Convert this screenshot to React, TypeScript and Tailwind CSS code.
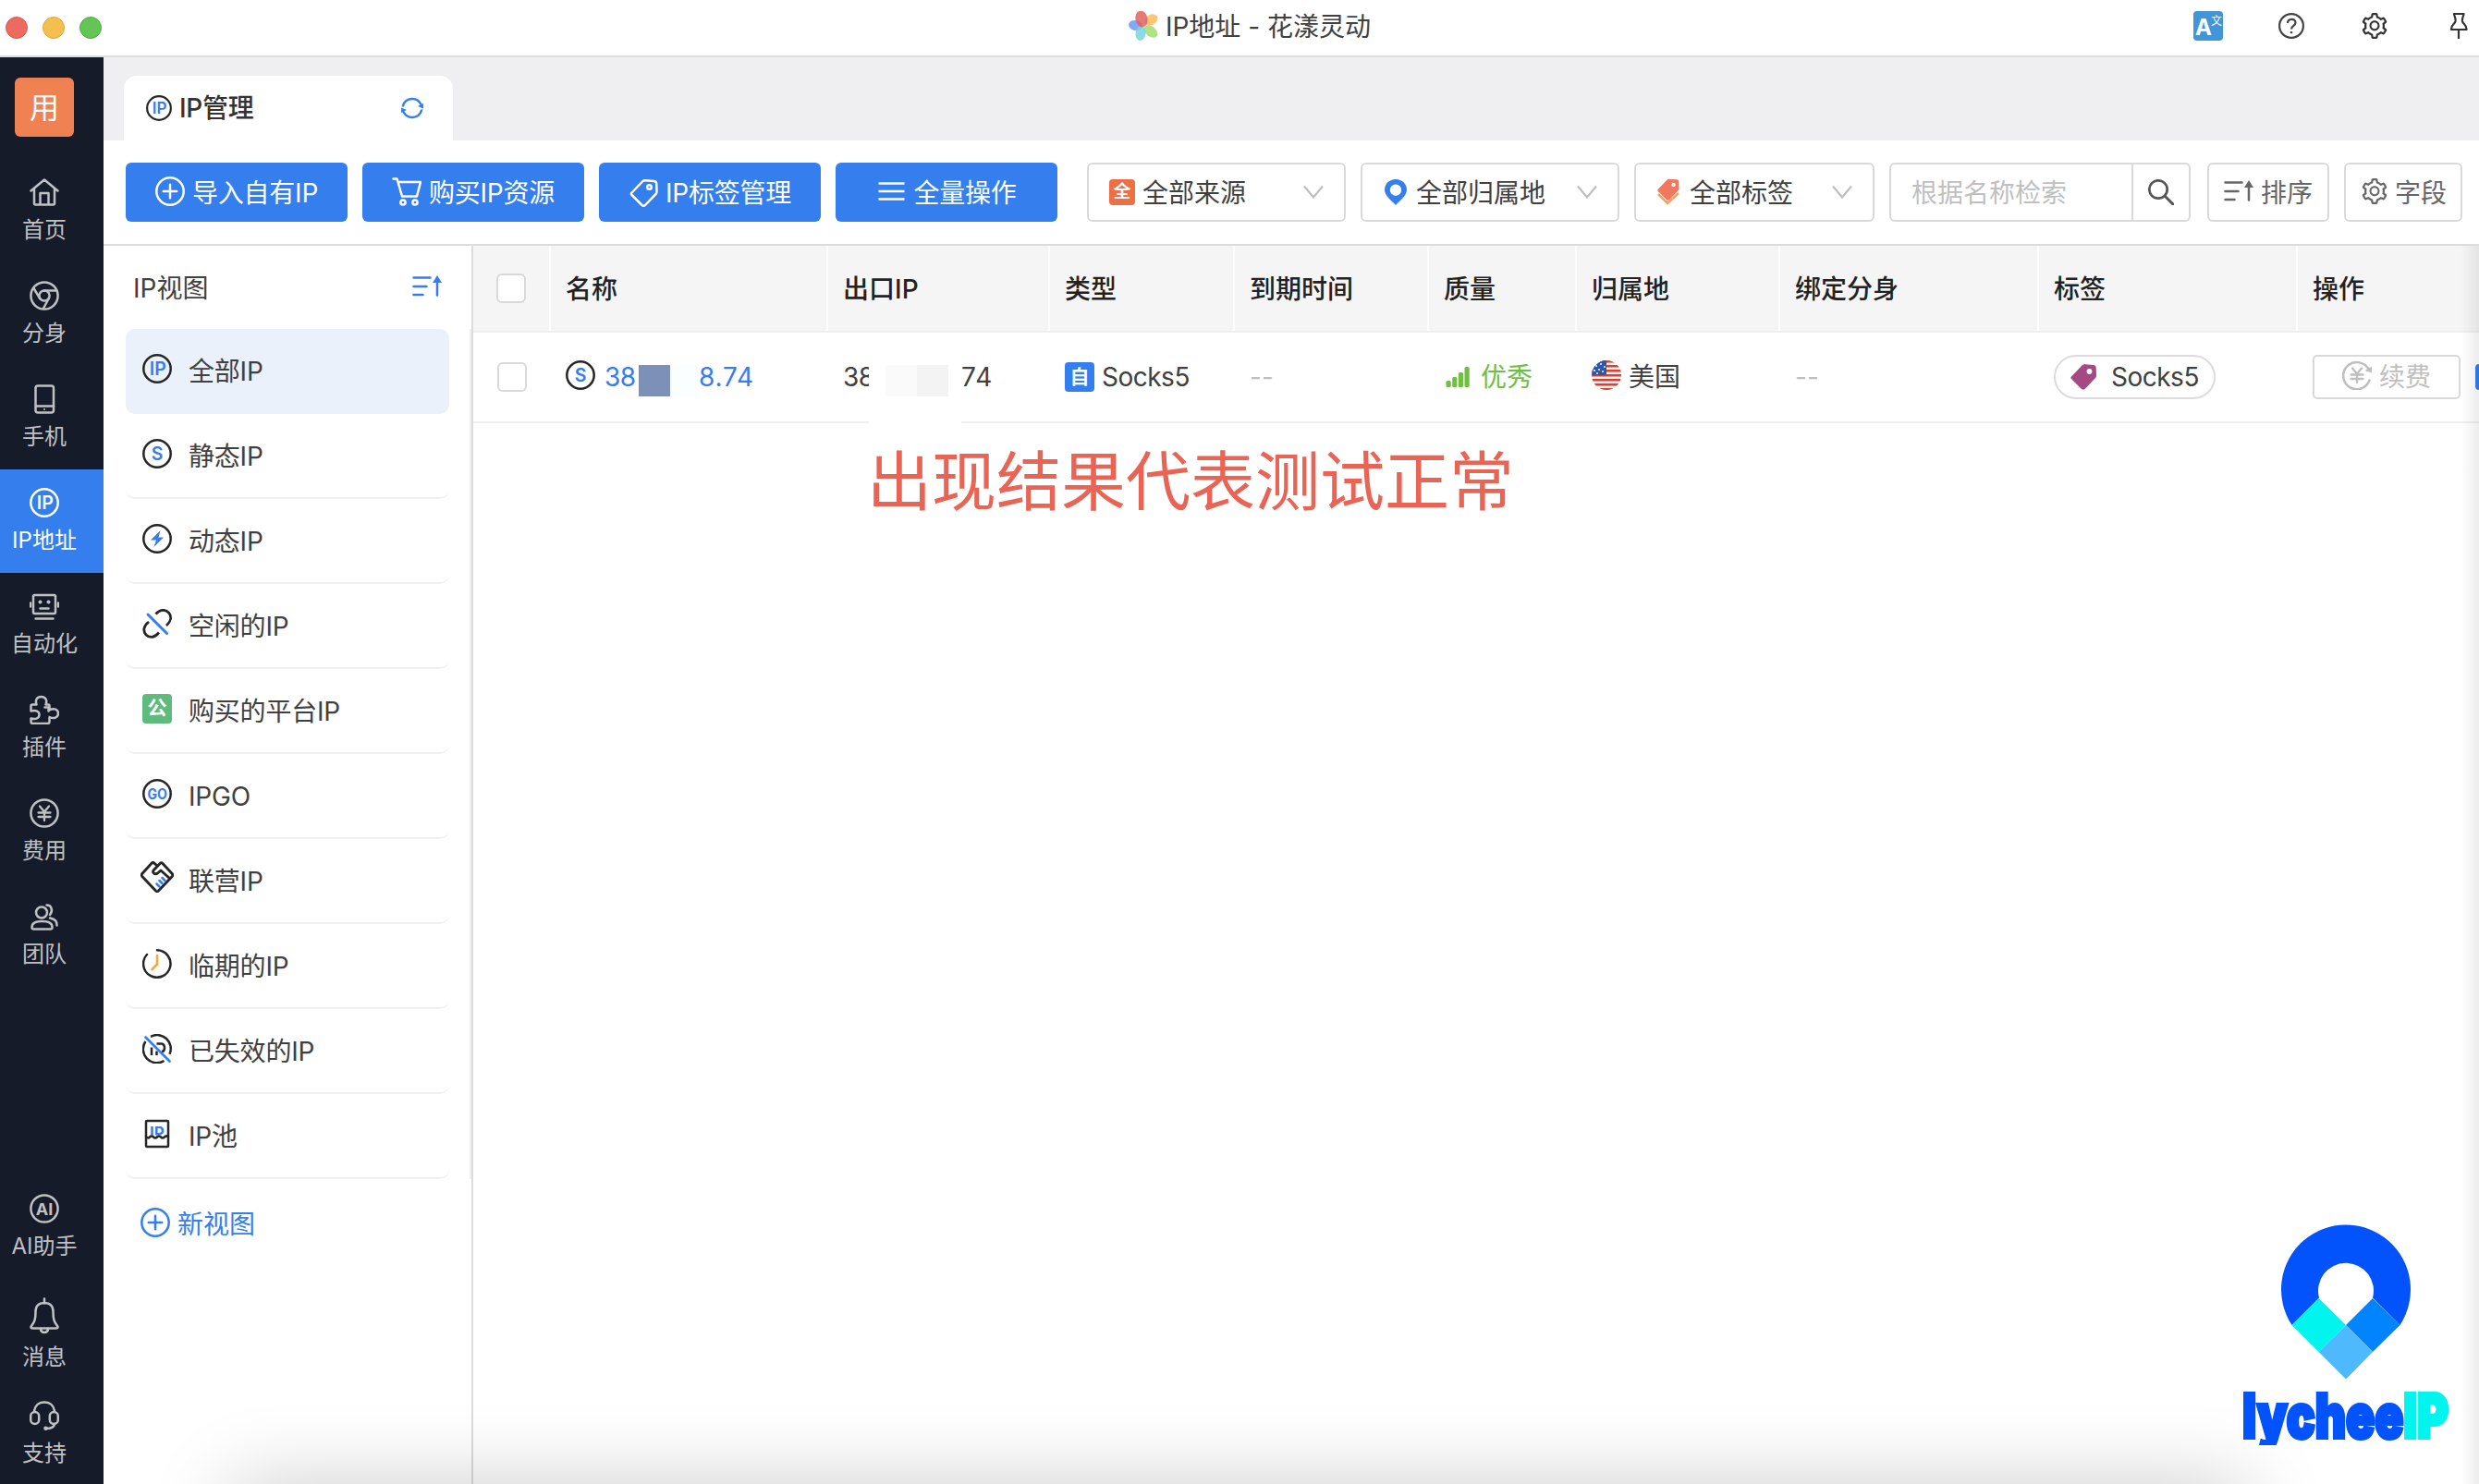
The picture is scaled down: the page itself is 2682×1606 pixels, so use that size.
import type { ReactNode } from "react";
import clsx from "clsx";
import { AiOutlineSetting } from "react-icons/ai";

type IconProps = { className?: string };

const DARK = "#262626";
const BLUE = "#347eee";

function Svg({
  size = 32,
  height,
  className,
  children,
}: {
  size?: number;
  height?: number;
  className?: string;
  children: ReactNode;
}) {
  return (
    <svg
      width={size}
      height={height ?? size}
      viewBox={`0 0 ${size} ${height ?? size}`}
      fill="none"
      stroke="currentColor"
      strokeWidth={2.5}
      strokeLinecap="round"
      strokeLinejoin="round"
      className={clsx("shrink-0", className)}
    >
      {children}
    </svg>
  );
}

function Glyph({ x = 16, y, size, fill = "currentColor", weight = 700, children }: {
  x?: number;
  y: number;
  size: number;
  fill?: string;
  weight?: number;
  children: ReactNode;
}) {
  return (
    <text x={x} y={y} fontSize={size} fontWeight={weight} fill={fill} stroke="none" textAnchor="middle">
      {children}
    </text>
  );
}

const HomeIcon = () => (
  <Svg>
    <path d="M1.5 14.5 16 2.5l14.5 12M5 12.5V28q0 1.5 1.5 1.5h19q1.5 0 1.5-1.5V12.5M11.5 29V17h9v12" />
  </Svg>
);

const ChromeIcon = () => (
  <Svg>
    <circle cx="16" cy="16" r="14.6" />
    <circle cx="16" cy="16" r="5.6" />
    <path d="M16 10.4h13M11.2 19 4.500 8M20.8 19l-6 11" />
  </Svg>
);

const PhoneIcon = () => (
  <Svg>
    <rect x="6.5" y="1.5" width="19.5" height="29" rx="2.5" />
    <path d="M7 23.5h19" />
    <circle cx="16" cy="27" r="1" fill="currentColor" stroke="none" />
  </Svg>
);

const IpIcon = ({ size = 32, ring = "currentColor", fill = "currentColor" }: { size?: number; ring?: string; fill?: string }) => (
  <svg width={size} height={size} viewBox="0 0 32 32" fill="none" className="shrink-0">
    <circle cx="16" cy="16" r="14.7" stroke={ring} strokeWidth="2.5" />
    <Glyph x={16.8} y={22.8} size={19.5} fill={fill} weight={600}>
      IP
    </Glyph>
  </svg>
);

const RobotIcon = () => (
  <Svg>
    <rect x="4" y="4" width="24" height="20" rx="1.5" />
    <path d="M11.5 18.5h9M1 12.5v4M31 12.5v4M6.5 29.5h19" />
    <circle cx="11.5" cy="11.5" r="2" fill="currentColor" stroke="none" />
    <circle cx="20.5" cy="11.5" r="2" fill="currentColor" stroke="none" />
  </Svg>
);

const PuzzleIcon = () => (
  <Svg>
    <path d="M3 10.5h4.500C5.8 5.5 8 2 12.5 2s7 3.5 5 8.5H20q1.5 0 1.5 1.5v4.5C26.5 14 31 15.5 31 20s-4.5 6.500-9.500 4V29q0 2-2 2H3.5q-2 0-2-2v-3.5C7 27 10.5 25 10.5 21.5S7 16 1.5 17.5V12q0-1.5 1.5-1.5z" />
    <path d="M16.5 13.5h4v4" />
  </Svg>
);

const Yen = () => <path d="m11 8.5 5 6 5-6M16 14.5V24M9.5 15.5h13M9.5 20h13" strokeWidth="2.3" />;

const FeeIcon = () => (
  <Svg>
    <circle cx="16" cy="16" r="14.6" />
    <Yen />
  </Svg>
);

const TeamIcon = () => (
  <Svg>
    <circle cx="13" cy="11.5" r="6" />
    <path d="M2.5 27.5c0-5 4.5-6.5 11-6.5s11 1.5 11 6.5q0 2-2 2h-18q-2 0-2-2zM18.5 3.5c5.5 0 7 6 3.5 10.5M22 17.5c5 1 8 3.5 7.5 8" />
  </Svg>
);

const AiIcon = () => (
  <Svg>
    <circle cx="16" cy="16" r="14.6" />
    <Glyph y={22.5} size={18}>
      AI
    </Glyph>
  </Svg>
);

const BellIcon = () => (
  <Svg size={32} height={40}>
    <path d="M16 1.500v5M16 6c6 0 9.5 3.5 9.5 9.5 0 8 1 11 4.5 15.5 1 1.5.5 2.5-1 2.5H3c-1.500 0-2-1-1-2.500 3.5-4.5 4.5-7.500 4.5-15.5C6.5 9.5 10 6 16 6zM12 34.5c.5 4.5 7.500 4.5 8 0" />
  </Svg>
);

const HeadsetIcon = () => (
  <Svg>
    <rect x="1.2" y="12" width="9" height="13" rx="4.5" />
    <rect x="21.8" y="12" width="9" height="13" rx="4.5" />
    <path d="M5 12C5.5 5 10 1.5 16 1.5S26.5 5 27 12M27 25c-.5 3.5-4 5-9 5" />
    <circle cx="17.5" cy="29.7" r="2.3" fill="currentColor" stroke="none" />
  </Svg>
);

const SIcon = () => (
  <Svg>
    <circle cx="16" cy="16" r="14.7" stroke={DARK} />
    <Glyph y={23} size={19.5} fill={BLUE} weight={600}>
      S
    </Glyph>
  </Svg>
);

const BoltIcon = () => (
  <Svg>
    <circle cx="16" cy="16" r="14.7" stroke={DARK} />
    <path d="M19.5 7 9 17.5h6L12.5 25 23 14.5h-5.5z" fill={BLUE} stroke="none" />
  </Svg>
);

const UnlinkIcon = () => (
  <Svg>
    <path
      d="M14.5 5.5C19 .5 24.5 0 28.5 4c3.5 4 2.5 9.5-2.5 14M7 14C1 18.5.5 24 4 28c4 4 9.5 3 14-2.5"
      stroke={DARK}
      strokeWidth="2.8"
      strokeLinecap="butt"
    />
    <path d="m6 6 20.5 20.5" stroke={BLUE} strokeWidth="3" />
  </Svg>
);

const GoIcon = () => (
  <Svg>
    <circle cx="16" cy="16" r="14.7" stroke={DARK} />
    <text
      x="5.5"
      y="21.5"
      fontSize="15.5"
      fontWeight="700"
      textLength="21.5"
      lengthAdjust="spacingAndGlyphs"
      fill={BLUE}
      stroke="none"
    >
      GO
    </text>
  </Svg>
);

const HandshakeIcon = () => (
  <svg width="36" height="34" viewBox="0 0 36 34" fill="none" strokeLinecap="round" strokeLinejoin="round" className="-mt-1 shrink-0">
    <path
      d="M17 4 14.5 1.8q-1-.8-2 0L1.8 13.5q-1.2 1.500 0 3L16.5 32q1.5 1.5 3 0l14.7-15.5q1.2-1.5 0-3L24 2.5q-1.5-1.5-3 0l-7 7.5q-1 1.5.3 2.8 2 1.8 4.2.2l3.5-3 10 9"
      stroke={DARK}
      strokeWidth="2.9"
    />
    <path d="m17.5 24.5 3 3M20.5 21l3 3M23.5 18l3 3" stroke={BLUE} strokeWidth="2.5" />
  </svg>
);

const ClockIcon = () => (
  <Svg>
    <path d="M16 1.3A14.7 14.7 0 1 1 5 6" stroke={DARK} />
    <path d="M16 7v9.5L10.5 22" stroke="#f2aa3c" strokeWidth="2.6" />
  </Svg>
);

const InvalidIcon = () => (
  <Svg>
    <path d="M9 2.8a14.8 14.8 0 0 1 20.5 19M23.5 29A14.8 14.8 0 0 1 3.5 8" stroke={DARK} strokeLinecap="butt" />
    <path d="M10 14.5V23M15.5 18.5V23M15.5 10.5h5q3.5.5 3.5 4.5t-3 4" stroke={DARK} strokeLinecap="butt" />
    <path d="m3.5 3.5 26 26" stroke={BLUE} strokeWidth="2.7" />
  </Svg>
);

const PoolIcon = () => (
  <Svg>
    <clipPath id="water">
      <rect width="32" height="17.500" />
    </clipPath>
    <rect x="4" y="2" width="24" height="28" rx="1" stroke={DARK} />
    <g clipPath="url(#water)">
      <Glyph y={21} size={17} fill={BLUE}>
        IP
      </Glyph>
    </g>
    <path d="M4 19q2 2.5 4 .5t4 0 4 0 4 0 4 0 4-.5" stroke={DARK} />
  </Svg>
);

const PlusCircle = ({ className }: IconProps) => (
  <Svg className={className}>
    <circle cx="16" cy="16" r="14.7" />
    <path d="M16 8.8v14.4M8.8 16h14.4" />
  </Svg>
);

const CartIcon = () => (
  <Svg className="-mt-1">
    <path d="M1.500 2.500h4l5.5 19h16L31 6H7" />
    <circle cx="12" cy="28" r="2.6" />
    <circle cx="25" cy="28" r="2.6" />
  </Svg>
);

const TAG_PATH =
  "M1 13.5 13 1q1-.8 2.5-.7L25 1q2.5.2 2.700 2.5L28 12.5q0 1.500-1 2.5L15.5 27q-2 1.600-3.5 0L1 16q-1.3-1.3 0-2.5z";

const TagOutline = () => (
  <Svg>
    <path d={TAG_PATH} transform="translate(2.5 2)" />
    <circle cx="22.5" cy="9.5" r="2.3" />
  </Svg>
);

const MenuIcon = () => (
  <Svg className="-mt-1">
    <path d="M2.500 7.5h28M2.500 16h28M2.500 24.500h28" strokeLinecap="butt" strokeWidth="2.600" />
  </Svg>
);

const SortIcon = ({ className }: IconProps) => (
  <Svg className={className}>
    <path d="M1.5 4.5h18M1.5 14h14M1.5 23h10M27 8v15.5" />
    <path d="m27 2 5 8H22z" fill="currentColor" stroke="none" />
  </Svg>
);

const RefreshIcon = () => (
  <Svg size={24} className="text-[#347eee]">
    <path d="M2 9.5A10.5 10.5 0 0 1 21.5 8M22 14.5A10.5 10.5 0 0 1 2.5 16" />
    <path d="M24 12.5V7l-6 3zM0 11.5V17l6-3z" fill="currentColor" stroke="none" />
  </Svg>
);

const ChevronDown = () => (
  <svg width="22" height="16" viewBox="0 0 22 16" fill="none" className="ml-auto shrink-0">
    <path d="m1 1.5 10 12 10-12" stroke="#bfbfbf" strokeWidth="2.2" />
  </svg>
);

const PinIcon = () => (
  <svg width="28" height="28" viewBox="0 0 28 28" fill="none" stroke="#333" strokeWidth="2.2" strokeLinejoin="round">
    <path d="M8 1h12.5M9 1c.3 3 2 4 1.5 8-.5 3-5 4-4.5 9h16.500c.5-5-4-6-4.500-9-.5-4 1.200-5 1.500-8M14 18v10" />
  </svg>
);

const HelpIcon = () => (
  <svg width="28" height="28" viewBox="0 0 28 28" fill="none" stroke="#444" strokeWidth="2.2">
    <circle cx="14" cy="14" r="12.900" />
    <path d="M10 11c0-5.500 8.500-5.500 8.500-.5 0 3.500-4.500 3.300-4.500 7" />
    <path d="M14 20v2.200" strokeWidth="2.400" />
  </svg>
);

const FlowerIcon = () => (
  <svg width="32" height="32" viewBox="0 0 32 32">
    <ellipse cx="7.5" cy="15.5" rx="7.5" ry="5.5" fill="#6e98f8" opacity=".85" transform="rotate(12 7.5 15.5)" />
    <ellipse cx="24.5" cy="9.5" rx="7.5" ry="5.5" fill="#f9bd5c" opacity=".85" transform="rotate(-32 24.5 9.5)" />
    <ellipse cx="24" cy="22" rx="8.5" ry="5.5" fill="#a3dc72" opacity=".85" transform="rotate(38 24 22)" />
    <ellipse cx="13" cy="24" rx="5.5" ry="8" fill="#77d5e0" opacity=".85" transform="rotate(8 13 24)" />
    <ellipse cx="14" cy="8.5" rx="6.5" ry="9" fill="#e2635c" opacity=".85" transform="rotate(-12 14 8.5)" />
  </svg>
);

const FlagIcon = () => (
  <svg width="32" height="32" viewBox="0 0 32 32" className="-mt-1 shrink-0">
    <clipPath id="flag">
      <circle cx="16" cy="16" r="16" />
    </clipPath>
    <g clipPath="url(#flag)">
      <rect width="32" height="32" fill="#f3f1f1" />
      {[0, 5, 10, 15, 20, 25, 30].map((y) => (
        <rect key={y} y={y} width="32" height="2.5" fill="#d8412f" />
      ))}
      <rect width="16" height="16" fill="#2b59a8" />
      {[[5, 6], [10, 4], [14, 7], [3, 11], [8, 10], [12, 12], [6, 14]].map(([x, y]) => (
        <circle key={`${x}-${y}`} cx={x} cy={y} r="1" fill="#fff" />
      ))}
    </g>
  </svg>
);

const SignalIcon = () => (
  <Svg>
    <g fill="#6fc040" stroke="none">
      <rect x="2.5" y="20" width="5.2" height="7" rx="1.5" />
      <rect x="9.2" y="16" width="5.2" height="11" rx="1.5" />
      <rect x="15.8" y="11" width="5.2" height="16" rx="1.5" />
      <rect x="22.5" y="5" width="5.2" height="22" rx="1.5" />
    </g>
  </Svg>
);

const RenewIcon = () => (
  <Svg className="-mt-1">
    <path d="M29.500 21.500A14.600 14.600 0 1 1 29 10.500" />
    <path d="m24.500 11 7.5 2.500V6.500z" fill="currentColor" stroke="none" />
    <Yen />
  </Svg>
);

const CharBadge = ({ className, children }: { className: string; children: string }) => (
  <span className={clsx("flex shrink-0 items-center justify-center rounded-[4px] font-bold text-white", className)}>
    {children}
  </span>
);

const navItems = [
  { label: "首页", icon: <HomeIcon /> },
  { label: "分身", icon: <ChromeIcon /> },
  { label: "手机", icon: <PhoneIcon /> },
  { label: "IP地址", icon: <IpIcon />, active: true },
  { label: "自动化", icon: <RobotIcon /> },
  { label: "插件", icon: <PuzzleIcon /> },
  { label: "费用", icon: <FeeIcon /> },
  { label: "团队", icon: <TeamIcon /> },
];

const footItems = [
  { label: "AI助手", icon: <AiIcon />, gap: "mt-[224px]" },
  { label: "消息", icon: <BellIcon />, gap: "mt-[38px]" },
  { label: "支持", icon: <HeadsetIcon />, gap: "mt-[30px]" },
];

const views = [
  { label: "全部IP", icon: <IpIcon ring={DARK} fill={BLUE} />, active: true },
  { label: "静态IP", icon: <SIcon /> },
  { label: "动态IP", icon: <BoltIcon /> },
  { label: "空闲的IP", icon: <UnlinkIcon /> },
  { label: "购买的平台IP", icon: <CharBadge className="size-8 bg-[#5eba7d] pb-0.5 text-[21px]">公</CharBadge> },
  { label: "IPGO", icon: <GoIcon /> },
  { label: "联营IP", icon: <HandshakeIcon /> },
  { label: "临期的IP", icon: <ClockIcon /> },
  { label: "已失效的IP", icon: <InvalidIcon /> },
  { label: "IP池", icon: <PoolIcon /> },
];

const columns = ["名称", "出口IP", "类型", "到期时间", "质量", "归属地", "绑定分身", "标签", "操作"];

const GRID = "grid grid-cols-[84px_300px_240px_200px_210px_160px_220px_280px_280px_196px]";

function TitleBar() {
  return (
    <header className="grid h-[62px] grid-cols-[1fr_auto_1fr] items-center border-b-2 border-[#dcdcdc] pl-[22px]">
      <div className="-ml-4 flex gap-4">
        <span className="size-6 rounded-full border border-[#d65a50] bg-[#ed6a5e]" />
        <span className="size-6 rounded-full border border-[#dca840] bg-[#f5bf4f]" />
        <span className="size-6 rounded-full border border-[#55a946] bg-[#62c554]" />
      </div>
      <div className="-mt-1 flex items-center gap-2 text-[#404040]">
        <FlowerIcon />
        <span className="pt-0.5">IP地址 - 花漾灵动</span>
      </div>
      <div className="-mt-1 flex items-center justify-end pr-2">
        <span className="relative mr-[60px] size-8 rounded-[4px] bg-[#4295d8] text-white">
          <span className="absolute top-[5px] left-[2px] text-[24px] leading-[26px] font-bold">A</span>
          <span className="absolute top-[4px] right-[1px] text-[12px] leading-[14px]">文</span>
        </span>
        <HelpIcon />
        <AiOutlineSetting className="mr-[61px] ml-[60px] size-8 text-[#333]" />
        <PinIcon />
      </div>
    </header>
  );
}

function Sidebar() {
  return (
    <nav className="flex w-[112px] shrink-0 flex-col bg-[#161b2a] text-[24px] leading-[34px] text-[#bfc1c5]">
      <div className="mt-[22px] ml-4 flex size-16 items-center justify-center rounded-[6px] bg-[#f08153] pt-0.5 text-[32px] text-white">
        用
      </div>
      <div className="mt-6">
        {navItems.map((item) => (
          <div
            key={item.label}
            className={clsx(
              "flex h-[112px] flex-col items-center gap-2 pt-5 pr-4 whitespace-nowrap",
              item.active && "bg-[#347eee] text-white",
            )}
          >
            {item.icon}
            <span>{item.label}</span>
          </div>
        ))}
      </div>
      {footItems.map((item) => (
        <div key={item.label} className={clsx("flex flex-col items-center gap-2 pr-4 whitespace-nowrap", item.gap)}>
          {item.icon}
          <span>{item.label}</span>
        </div>
      ))}
    </nav>
  );
}

function TabBar() {
  return (
    <div className="flex h-[90px] shrink-0 items-end bg-[#efeff1] pl-[22px]">
      <div className="flex h-[70px] w-[356px] items-center gap-2 rounded-t-[14px] bg-white pr-8 pl-6 font-medium text-[#333]">
        <IpIcon size={28} ring={DARK} fill={BLUE} />
        <span className="mr-auto tracking-[-0.3px]">IP管理</span>
        <RefreshIcon />
      </div>
    </div>
  );
}

function PrimaryButton({ icon, children }: { icon: ReactNode; children: string }) {
  return (
    <button className="flex h-16 w-60 shrink-0 items-center justify-center gap-2 rounded-[6px] bg-[#347eee] pt-0.5 tracking-[-0.2px] whitespace-nowrap text-white">
      {icon}
      {children}
    </button>
  );
}

function Select({ icon, className, children }: { icon: ReactNode; className: string; children: string }) {
  return (
    <div
      className={clsx(
        "flex h-16 shrink-0 items-center gap-2 rounded-[6px] border-2 border-[#d9d9d9] px-[22px] whitespace-nowrap",
        className,
      )}
    >
      {icon}
      <span className="pt-0.5">{children}</span>
      <ChevronDown />
    </div>
  );
}

function Toolbar() {
  return (
    <div className="flex h-[114px] shrink-0 items-center gap-4 border-b-2 border-[#dcdcdc] pl-6 text-[#404040]">
      <PrimaryButton icon={<PlusCircle className="-mt-1" />}>导入自有IP</PrimaryButton>
      <PrimaryButton icon={<CartIcon />}>购买IP资源</PrimaryButton>
      <PrimaryButton icon={<TagOutline />}>IP标签管理</PrimaryButton>
      <PrimaryButton icon={<MenuIcon />}>全量操作</PrimaryButton>
      <Select className="ml-4 w-[280px]" icon={<CharBadge className="size-7 bg-[#ee6f43] text-[19px]">全</CharBadge>}>
        全部来源
      </Select>
      <Select
        className="w-[280px]"
        icon={
          <svg width="28" height="28" viewBox="0 0 28 28">
            <path
              d="M14 0C7 0 2 5 2 11.5 2 18 9.5 23 14 28c4.5-5 12-10 12-16.5C26 5 21 0 14 0zm0 5.5a6.2 6.2 0 1 1 0 12.4 6.2 6.2 0 0 1 0-12.4z"
              fill={BLUE}
              fillRule="evenodd"
            />
          </svg>
        }
      >
        全部归属地
      </Select>
      <Select
        className="w-[260px]"
        icon={
          <svg width="28" height="28" viewBox="0 0 28 28">
            <path d="m2 16 10 10 12-11" fill="none" stroke="#f5a361" strokeWidth="2.5" />
            <path d={TAG_PATH} transform="translate(1 -.5) scale(.84)" fill="#f0785f" />
            <circle cx="18.5" cy="6" r="2.2" fill="#fff" />
          </svg>
        }
      >
        全部标签
      </Select>
      <div className="mr-0.5 flex h-16 w-[326px] shrink-0 items-stretch rounded-[6px] border-2 border-[#d9d9d9]">
        <div className="flex flex-1 items-center border-r-2 border-[#d9d9d9] pt-0.5 pl-[22px] text-[#bfbfbf]">根据名称检索</div>
        <div className="flex w-[60px] items-center justify-center text-[#555]">
          <Svg size={28}>
            <circle cx="11" cy="11" r="9.7" strokeWidth="2.7" />
            <path d="m18.5 18.5 8.5 8.5" strokeWidth="3" />
          </Svg>
        </div>
      </div>
      <button className="flex h-16 w-[132px] shrink-0 items-center justify-center gap-2 rounded-[6px] border-2 border-[#d9d9d9] pt-0.5 text-[#666]">
        <SortIcon />
        排序
      </button>
      <button className="flex h-16 w-32 shrink-0 items-center justify-center gap-[6px] rounded-[6px] border-2 border-[#d9d9d9] pt-0.5 text-[#666]">
        <AiOutlineSetting className="-mt-1 size-8 shrink-0" />
        字段
      </button>
    </div>
  );
}

function ViewPanel() {
  return (
    <aside className="w-[400px] shrink-0 border-r-2 border-[#dcdcdc] text-[#404040]">
      <div className="flex h-[90px] items-center justify-between pt-0.5 pr-8 pl-8">
        <span>IP视图</span>
        <SortIcon className="text-[#347eee]" />
      </div>
      <div className="border-r-2 border-[#efefef] pr-[22px] pl-6">
        {views.map((view) => (
          <div
            key={view.label}
            className={clsx(
              "flex h-[92px] items-center gap-[18px] rounded-[10px] border-b-2 pl-[18px]",
              view.active ? "border-transparent bg-[#eaf1fa]" : "border-[#f0f0f0]",
            )}
          >
            <span className="-mt-1 flex w-8 justify-center">{view.icon}</span>
            <span className="pt-0.5 tracking-[-0.2px]">{view.label}</span>
          </div>
        ))}
      </div>
      <button className="mt-[30px] ml-10 flex h-9 items-center gap-2 pt-0.5 text-[#347eee]">
        <PlusCircle className="-mt-1" />
        新视图
      </button>
    </aside>
  );
}

const Checkbox = () => <span className="size-8 rounded-[6px] border-2 border-[#d9d9d9] bg-white" />;

function IpTable() {
  return (
    <section className="min-w-0 flex-1 overflow-hidden">
      <div className={clsx(GRID, "h-[94px] border-b-2 border-[#efefef] bg-[#f5f5f5] font-medium text-[#222]")}>
        <div className="flex items-center border-r-2 border-white pl-[25px]">
          <Checkbox />
        </div>
        {columns.map((name, i) => (
          <div
            key={name}
            className={clsx("flex items-center pt-0.5 pl-4", i < columns.length - 1 && "border-r-2 border-white")}
          >
            {name}
          </div>
        ))}
      </div>
      <div className={clsx(GRID, "h-[98px] items-stretch border-b-2 border-[#efefef] text-[#404040]")}>
        <div className="flex items-center pl-[26px]">
          <Checkbox />
        </div>
        <div className="flex items-center pl-4 text-[#347eee]">
          <span className="-mt-1">
            <SIcon />
          </span>
          <span className="ml-[10px] w-[37px] tracking-[-0.5px]">38</span>
          <span className="mt-2 size-[34px] bg-[#7d90b7]" />
          <span className="mt-2 h-[34px] w-[31px] bg-[#fbfeff]" />
          <span className="tracking-[0.8px]">8.74</span>
        </div>
        <div className="relative flex items-center pl-4">
          <span className="w-7 overflow-hidden tracking-[-0.5px]">38</span>
          <span className="mt-2 ml-[18px] size-[34px] bg-[#fafafa]" />
          <span className="mt-2 mr-[14px] size-[34px] bg-[#f3f3f3]" />
          <span className="tracking-[1px]">74</span>
          <span className="absolute -bottom-0.5 left-11 h-0.5 w-[100px] bg-white" />
        </div>
        <div className="flex items-center gap-2 pl-4">
          <CharBadge className="size-8 bg-[#347eee] text-[21px]">自</CharBadge>
          <span className="tracking-[-0.5px]">Socks5</span>
        </div>
        <div className="flex items-center pl-4 text-[#bfbfbf]">--</div>
        <div className="flex items-center gap-2 pl-4 text-[#6fc040]">
          <SignalIcon />
          优秀
        </div>
        <div className="flex items-center gap-2 pl-4">
          <FlagIcon />
          美国
        </div>
        <div className="flex items-center pl-4 text-[#bfbfbf]">--</div>
        <div className="flex items-center pl-4">
          <span className="flex h-12 w-[175px] items-center gap-4 rounded-full border-2 border-[#dcdcdc] pl-4 tracking-[-0.5px]">
            <svg width="28" height="28" viewBox="0 0 28 28">
              <path d={TAG_PATH} fill="#a64883" />
              <circle cx="20.5" cy="8" r="2.9" fill="#fff" />
            </svg>
            Socks5
          </span>
        </div>
        <div className="flex items-center pl-4">
          <span className="flex h-12 w-40 shrink-0 items-center justify-center gap-2 rounded-[5px] border-2 border-[#d9d9d9] text-[#bfbfbf]">
            <RenewIcon />
            续费
          </span>
          <span className="ml-4 h-7 w-10 shrink-0 rounded-[4px] bg-[#347eee]" />
        </div>
      </div>
    </section>
  );
}

function LycheeLogo() {
  return (
    <svg width="230" height="240" viewBox="0 0 230 240" className="absolute top-[1324px] left-[2422px]">
      <path d="M57.5 110A70 70 0 1 1 174.5 110L145 80.5A30 30 0 1 0 87 80.5z" fill="#0353fd" />
      <path d="m57.5 110 29-29L116 110l-29.5 29z" fill="#02f4ee" />
      <path d="m116 110 29-29 29.5 29-29.5 29z" fill="#0284fe" />
      <path d="m116 110 29 29-29 29.5L86.5 139z" fill="#4fb9fe" />
      <text
        x="4"
        y="231.5"
        fontSize="66"
        fontWeight="900"
        strokeWidth="4"
        textLength="223"
        lengthAdjust="spacingAndGlyphs"
      >
        <tspan fill="#0353fd" stroke="#0353fd">lychee</tspan>
        <tspan fill="#02f4ee" stroke="#02f4ee">IP</tspan>
      </text>
    </svg>
  );
}

export default function App() {
  return (
    <div className="relative flex h-[1606px] w-[2682px] flex-col overflow-hidden bg-white font-['Inter','Noto_Sans_CJK_SC',sans-serif] text-[28px] leading-[40px]">
      <TitleBar />
      <div className="flex min-h-0 flex-1">
        <Sidebar />
        <main className="flex min-w-0 flex-1 flex-col">
          <TabBar />
          <Toolbar />
          <div className="flex min-h-0 flex-1">
            <ViewPanel />
            <IpTable />
          </div>
        </main>
      </div>

      {/* soft shadows along the bottom and right edges */}
      <div className="pointer-events-none absolute top-full left-[250px] h-40 w-[2180px] shadow-[0_0_90px_rgba(0,0,0,0.2)]" />
      <div className="pointer-events-none absolute top-[266px] right-0 bottom-0 w-5 bg-linear-to-l from-black/7 to-transparent" />

      <p className="absolute top-[482px] left-[938px] text-[70px] leading-[80px] whitespace-nowrap text-[#ea6455]">
        出现结果代表测试正常
      </p>
      <LycheeLogo />
    </div>
  );
}
